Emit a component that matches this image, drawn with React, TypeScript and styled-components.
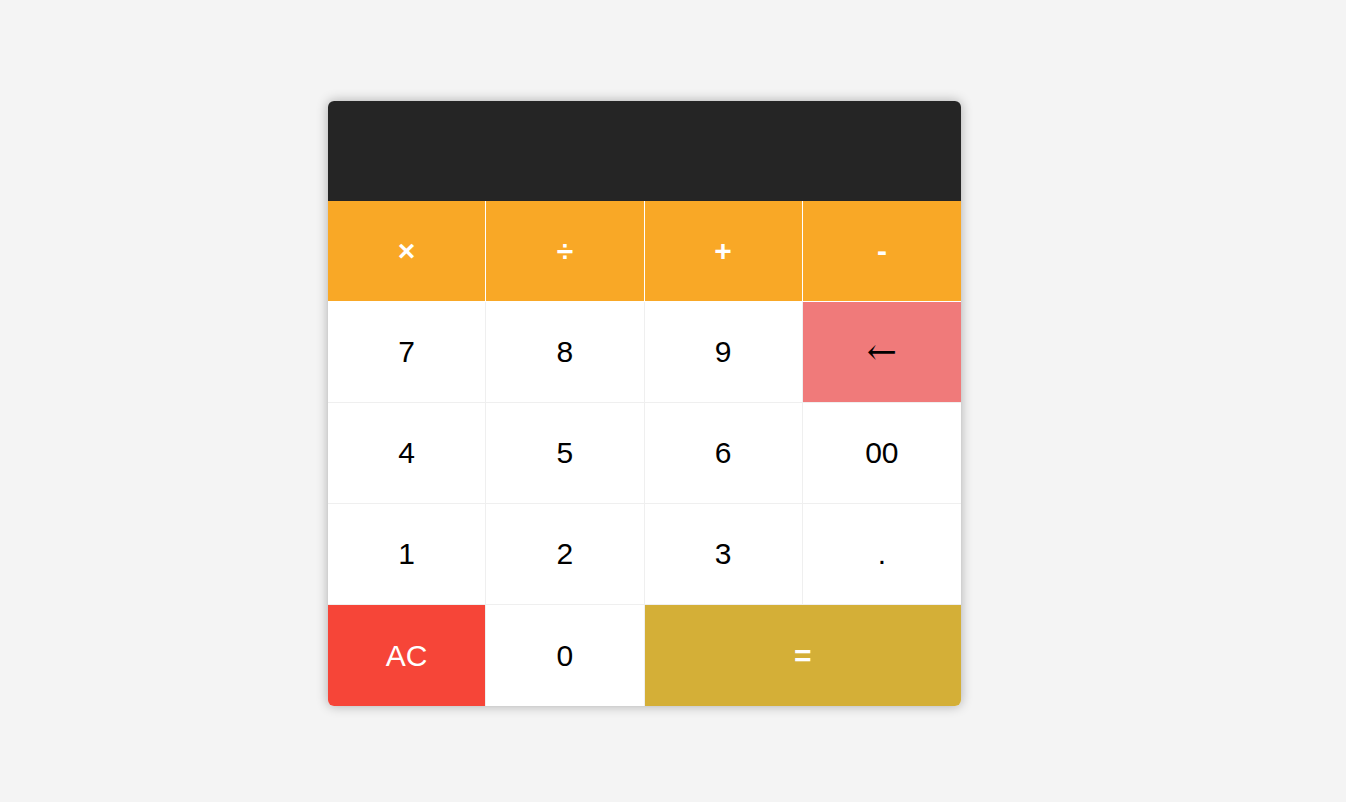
import React from "react";
import styled, { createGlobalStyle } from "styled-components";

const Global = createGlobalStyle`
  html, body { margin: 0; padding: 0; background: #f4f4f4; }
  body { font-family: "Liberation Sans", Arial, sans-serif; }
`;

const Page = styled.div`
  min-height: 802px;
  padding: 101px 0 0 328px;
  box-sizing: border-box;
`;

const Card = styled.div`
  width: 633px;
  border-radius: 6px;
  overflow: hidden;
  background: #fff;
  box-shadow: 0 0 12px rgba(0, 0, 0, 0.3);
`;

const Display = styled.div`
  height: 100px;
  background: #252525;
  color: #fff;
  font-size: 40px;
  display: flex;
  align-items: center;
  justify-content: flex-end;
  padding: 0 20px;
`;

const Keys = styled.div`
  display: grid;
  grid-template-columns: repeat(4, 1fr);
  grid-auto-rows: 101px;
`;

type Variant = "op" | "num" | "back" | "clear" | "equal";

const bg: Record<Variant, string> = {
  op: "#f9a826",
  num: "#ffffff",
  back: "#f07a7a",
  clear: "#f64538",
  equal: "#d4af37",
};

const Key = styled.button<{ $v: Variant; $span?: number; $last?: boolean; $edge?: boolean }>`
  all: unset;
  box-sizing: border-box;
  display: flex;
  align-items: center;
  justify-content: center;
  grid-column: span ${(p) => p.$span ?? 1};
  background: ${(p) => bg[p.$v]};
  color: ${(p) => (p.$v === "num" || p.$v === "back" ? "#000" : "#fff")};
  font-family: "Liberation Sans", Arial, sans-serif;
  font-size: 30px;
  font-weight: ${(p) => (p.$v === "op" || p.$v === "equal" ? 700 : 400)};
  border-right: ${(p) => (p.$edge ? "none" : `1px solid ${p.$v === "op" ? "#ffffff" : "#efefef"}`)};
  border-bottom: ${(p) => (p.$last ? "none" : `1px solid ${p.$v === "op" ? "#ffffff" : "#efefef"}`)};
  cursor: pointer;
`;

const Arrow = styled.span`
  font-family: "DejaVu Serif", "Liberation Serif", serif;
  font-size: 36px;
  font-weight: 400;
  line-height: 1;
`;

export default function App() {
  return (
    <>
      <Global />
      <Page>
        <Card>
          <Display />
          <Keys>
            <Key $v="op">×</Key>
            <Key $v="op">÷</Key>
            <Key $v="op">+</Key>
            <Key $v="op" $edge>-</Key>
            <Key $v="num">7</Key>
            <Key $v="num">8</Key>
            <Key $v="num">9</Key>
            <Key $v="back" $edge>
              <Arrow>←</Arrow>
            </Key>
            <Key $v="num">4</Key>
            <Key $v="num">5</Key>
            <Key $v="num">6</Key>
            <Key $v="num" $edge>00</Key>
            <Key $v="num">1</Key>
            <Key $v="num">2</Key>
            <Key $v="num">3</Key>
            <Key $v="num" $edge>.</Key>
            <Key $v="clear" $last>AC</Key>
            <Key $v="num" $last>0</Key>
            <Key $v="equal" $span={2} $last $edge>=</Key>
          </Keys>
        </Card>
      </Page>
    </>
  );
}
